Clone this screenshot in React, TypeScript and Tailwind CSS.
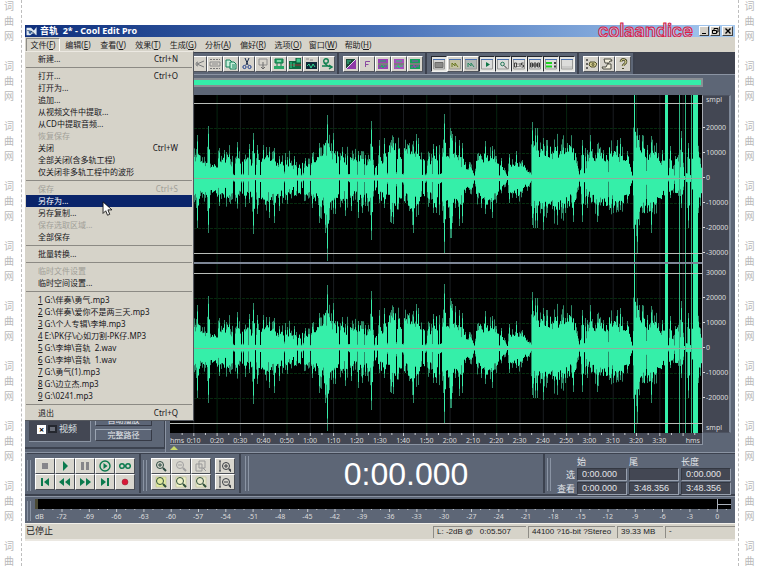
import React from "react";

interface MenuEntry {
  label: string;
  hotkey?: string;
  shortcut?: string;
  disabled?: boolean;
  active?: boolean;
}

const menuBar = [
  ["文件", "F"],
  ["编辑", "E"],
  ["查看", "V"],
  ["效果", "T"],
  ["生成", "G"],
  ["分析", "A"],
  ["偏好", "R"],
  ["选项", "O"],
  ["窗口", "W"],
  ["帮助", "H"],
];

const fileMenu: MenuEntry[][] = [
  [{ label: "新建...", shortcut: "Ctrl+N" }],
  [
    { label: "打开...", shortcut: "Ctrl+O" },
    { label: "打开为..." },
    { label: "追加..." },
    { label: "从视频文件中提取..." },
    { label: "从CD中提取音频..." },
    { label: "恢复保存", disabled: true },
    { label: "关闭", shortcut: "Ctrl+W" },
    { label: "全部关闭(含多轨工程)" },
    { label: "仅关闭非多轨工程中的波形" },
  ],
  [
    { label: "保存", shortcut: "Ctrl+S", disabled: true },
    { label: "另存为...", active: true },
    { label: "另存复制..." },
    { label: "保存选取区域...", disabled: true },
    { label: "全部保存" },
  ],
  [{ label: "批量转换..." }],
  [{ label: "临时文件设置", disabled: true }, { label: "临时空间设置..." }],
  [
    { hotkey: "1", label: "G:\\伴奏\\勇气.mp3" },
    { hotkey: "2", label: "G:\\伴奏\\爱你不是两三天.mp3" },
    { hotkey: "3", label: "G:\\个人专辑\\李坤.mp3" },
    { hotkey: "4", label: "E:\\PK仔\\心如刀割-PK仔.MP3" },
    { hotkey: "5", label: "G:\\李坤\\音轨  2.wav" },
    { hotkey: "6", label: "G:\\李坤\\音轨  1.wav" },
    { hotkey: "7", label: "G:\\勇气(1).mp3" },
    { hotkey: "8", label: "G:\\边立杰.mp3" },
    { hotkey: "9", label: "G:\\0241.mp3" },
  ],
  [{ label: "退出", shortcut: "Ctrl+Q" }],
];

// [x, amplitude] of the loudness curve
const loudness = [
  [0, 16], [25, 20], [35, 18], [45, 15], [55, 22], [65, 19], [75, 22], [85, 18],
  [95, 24], [105, 16], [115, 20], [127, 15], [135, 18], [142, 20], [150, 26],
  [157, 36], [163, 27], [170, 22], [180, 20], [190, 20], [200, 22], [206, 12],
  [212, 24], [222, 32], [230, 26], [240, 30], [248, 26], [258, 18], [266, 30],
  [276, 28], [288, 22], [293, 12], [302, 10], [304, 2], [306, 20], [315, 24],
  [325, 22], [335, 6], [337, 2], [339, 15], [348, 17], [358, 8], [361, 3],
  [363, 32], [375, 28], [390, 30], [405, 29], [409, 4], [413, 29], [417, 10],
  [420, 25], [430, 27], [445, 28], [458, 20], [462, 2], [464, 40], [470, 34],
  [482, 30], [488, 20], [495, 18], [503, 12], [507, 18], [512, 12], [516, 5],
  [520, 4], [524, 32], [532, 16],
];

// [x, height above zero, height below zero]
const peaks = [
  [27, 43, 50], [38, 52, 55], [49, 30, 28], [54, 28, 18], [67, 36, 30], [79, 34, 25],
  [83, 45, 56], [87, 33, 36], [93, 33, 20], [99, 31, 40], [104, 30, 45], [109, 22, 33],
  [117, 21, 26], [124, 22, 15], [135, 20, 20], [142, 25, 30], [149, 35, 45],
  [155, 33, 55], [157, 63, 83], [163, 45, 35], [165, 27, 36], [172, 31, 25],
  [175, 24, 38], [181, 20, 33], [188, 27, 40], [192, 22, 35], [195, 23, 28],
  [201, 57, 62], [209, 38, 25], [214, 40, 30], [221, 38, 45], [223, 41, 46],
  [228, 25, 30], [239, 35, 33], [243, 37, 55], [246, 44, 25], [248, 40, 20],
  [259, 25, 25], [263, 34, 35], [266, 32, 35], [274, 64, 75], [280, 50, 60],
  [282, 44, 45], [285, 42, 30], [289, 38, 48], [281, 47, 60], [292, 35, 45],
  [295, 16, 15], [299, 16, 12], [311, 22, 30], [315, 37, 36], [322, 32, 40],
  [326, 22, 20], [331, 20, 15], [339, 24, 25], [346, 27, 20], [352, 18, 15],
  [362, 56, 47], [365, 50, 50], [367, 50, 50], [373, 40, 52], [377, 38, 35],
  [387, 37, 44], [395, 30, 35], [397, 35, 30], [403, 30, 44], [412, 38, 44],
  [417, 28, 30], [420, 43, 20], [427, 30, 44], [433, 28, 28], [439, 28, 32],
  [443, 25, 35], [447, 38, 32], [450, 40, 32], [457, 27, 25], [464, 84, 85],
  [467, 50, 75], [472, 43, 35], [477, 33, 35], [481, 42, 55], [488, 25, 20],
  [492, 28, 15], [500, 32, 20], [505, 22, 10], [511, 47, 30], [518, 35, 50],
  [528, 31, 35],
];

// [x, width] of the bursts that clip
const clipped = [[464, 1], [495, 3], [509, 1], [515, 1], [521, 1], [523, 5]];

const noise = (n: number) => {
  const s = Math.sin(n * 127.1 + 11.7) * 43758.5453;
  return s - Math.floor(s);
};

const loudnessAt = (x: number) => {
  let i = 1;
  while (i < loudness.length - 1 && loudness[i][0] < x) i++;
  const [x0, a0] = loudness[i - 1];
  const [x1, a1] = loudness[i];
  return a0 + ((a1 - a0) * (x - x0)) / (x1 - x0);
};

const buildWave = (mid: number, top: number, bottom: number) => {
  let bright = "";
  let dim = "";
  for (let x = 0; x < 532; x++) {
    const amp = loudnessAt(x);
    const quiet = x < 300 ? 0.15 : 0.07;
    const dip = noise(x * 3 + 5) < quiet ? 0.2 : 1;
    const pair = Math.floor(x / 2);
    const up = Math.max(2, amp * (0.5 + 0.4 * noise(pair) + 0.3 * noise(x)) * dip);
    const down = Math.max(2, amp * (0.5 + 0.4 * noise(pair + 700) + 0.3 * noise(x + 900)) * dip);
    bright += `M${x + 0.5} ${(mid - up).toFixed(1)}V${(mid + down).toFixed(1)}`;
    if (noise(x + 400) < 0.35) {
      dim += `M${x + 0.5} ${(mid - up * 1.4).toFixed(1)}V${(mid + down * 1.4).toFixed(1)}`;
    }
  }
  peaks.forEach(([x, up, down]) => {
    const y0 = Math.max(top, mid - up);
    const y1 = Math.min(bottom, mid + down);
    dim += `M${x + 0.5} ${y0}V${y1}`;
    dim += `M${x - 0.5} ${mid - up * 0.6}V${mid + down * 0.6}`;
    bright += `M${x + 0.5} ${mid - up * 0.85}V${mid + down * 0.85}`;
    bright += `M${x + 1.5} ${mid - up * 0.55}V${mid + down * 0.55}`;
  });
  return { bright, dim };
};

const channels = [
  { mid: 83, top: 0, bottom: 167 },
  { mid: 253, top: 169, bottom: 338 },
];

const Waveform = () => (
  <svg
    viewBox="0 0 532 338"
    preserveAspectRatio="none"
    className="block h-[338px] w-full bg-black"
    role="img"
    aria-label="波形"
  >
    {Array.from({ length: 22 }, (_, i) => (
      <rect key={i} x={23.3 * (i + 1)} y="0" width="1" height="338" fill={i % 3 === 1 ? "#06240f" : "#1a1d21"} />
    ))}
    {channels.map(({ mid, top, bottom }) => {
      const { bright, dim } = buildWave(mid, top, bottom);
      return (
        <g key={mid}>
          {[-50, -25, 25, 50].map((d) => (
            <path key={d} d={`M0 ${mid + d + 0.5}H532`} stroke="#062a0e" strokeDasharray="3 1" />
          ))}
          <path d={dim} stroke="#2c8a68" fill="none" />
          <path d={bright} stroke="#35efa9" fill="none" />
          {clipped.map(([x, w]) => (
            <rect
              key={x}
              x={x}
              y={top}
              width={w}
              height={bottom - top}
              fill={w === 1 && x > 500 ? "#2cb582" : "#35efa9"}
            />
          ))}
          <path d={`M0 ${mid - 74.5}H532M0 ${mid + 75.5}H532`} stroke="#b9bdb9" />
          <path d={`M0 ${mid + 0.5}H532`} stroke="#8fae9c" />
        </g>
      );
    })}
    <rect x="0" y="167" width="532" height="2" fill="#7d8696" />
  </svg>
);

const Icon = ({ children }: { children: React.ReactNode }) => (
  <svg viewBox="0 0 12 12" className="h-3 w-3 shrink-0" fill="none" stroke="#3f4248" aria-hidden="true">
    {children}
  </svg>
);

const waveBox = (color: string, line: string) => (
  <>
    <rect x="1" y="1" width="10" height="4" fill={color} stroke="none" />
    <rect x="1" y="7" width="10" height="4" fill={color} stroke="none" />
    <path d="M1 6h10" stroke="#223" />
    <path d="M2 9h2l1-2 1 3 1-2h3M3 3h6" stroke={line} />
  </>
);

const editTools: [string, React.ReactNode][] = [
  ["撤消", <path d="M11 3L4 6l7 3M5 4a2 2 0 1 0 0 4" stroke="#77797b" />],
  [
    "多轨",
    <>
      <path d="M1 1.5h10M1 10.5h10" strokeDasharray="2 1" stroke="#777" />
      <path d="M1 4h10v4H1zM3 6h6" stroke="#8a8a8a" />
    </>,
  ],
  [
    "复制",
    <>
      <path d="M1 2h4l2 2v5H1z" fill="#c8f0dc" stroke="#128058" />
      <path d="M5 4h4l2 2v5H5zM7 7h3M7 9h3" fill="#c8f0dc" stroke="#128058" />
    </>,
  ],
  [
    "剪切",
    <>
      <path d="M4 0l3 7M8 0L5 7" stroke="#1a2a4a" />
      <circle cx="3.5" cy="9" r="1.6" stroke="#1c3c8c" />
      <circle cx="8.5" cy="9" r="1.6" stroke="#1c3c8c" />
    </>,
  ],
  [
    "粘贴",
    <>
      <path d="M2 1h8v6H2z" stroke="#8d8d8d" />
      <path d="M6 4v7M4 9l2 2 2-2" stroke="#6a6a6a" />
    </>,
  ],
  [
    "混合粘贴",
    <>
      <path d="M2 1h8v4H2z" fill="#2aa868" stroke="#107848" />
      <path d="M4 3h4" stroke="#d8ffe8" />
      <path d="M4 5v3M8 5v3" stroke="#107848" />
      <path d="M1 8h10v3H1z" fill="#2aa868" stroke="none" />
    </>,
  ],
  [
    "复制为新",
    <>
      <path d="M0 3h12v8H0z" fill="#0d6a40" stroke="none" />
      <path d="M7 0h5v5H7z" fill="#3fc488" stroke="#0d5030" />
      <path d="M0 7h12" stroke="#b02030" />
      <path d="M2 4v6M5 5v4" stroke="#32d890" />
    </>,
  ],
  [
    "修剪",
    <>
      <path d="M1 4h11v7H1z" fill="#102838" stroke="none" />
      <path d="M1 1h3M5 2h3" stroke="#888" />
      <path d="M2 8l2-2 2 4 2-4 2 3" stroke="#32d890" />
    </>,
  ],
  [
    "转换采样",
    <>
      <circle cx="5" cy="3" r="2.3" stroke="#118050" strokeWidth="1.400" />
      <path d="M3 5l4 3M1 8h6l3 1M8 7l3 2-3 2" stroke="#118050" strokeWidth="1.400" />
    </>,
  ],
];

const rangeTools: [string, React.ReactNode][] = [
  [
    "频谱视图",
    <>
      <path d="M1 1h10v10H1z" fill="#8e3aa8" stroke="none" />
      <path d="M1 1h10L1 11z" fill="#1c4a38" stroke="none" />
      <path d="M11 1L1 11" stroke="#e6d8f0" />
      <path d="M3 2v4M5 2v2" stroke="#36d090" />
    </>,
  ],
  ["标记", <path d="M4.500 9V3.500h4.500M4.500 6.500h3" stroke="#8a4aa0" />],
  ["上部", waveBox("#9c40b4", "#1bb060")],
  ["中部", waveBox("#a850bc", "#28d070")],
  ["下部", waveBox("#18a05c", "#9c40b4")],
];

const windowIcon = (inner: React.ReactNode, body = "#dcdcda") => (
  <>
    <path d="M0.5 1.5h11v9.500H.5z" fill={body} stroke="#9a9a98" />
    <path d="M0 1.500h12" stroke="#4a70b0" />
    {inner}
  </>
);

const viewTools: [string, React.ReactNode, boolean][] = [
  ["组织窗口", windowIcon(<path d="M2 4.500h8v5H2z" fill="#8a8a88" stroke="#6c6c6a" />, "#d4d4d2"), true],
  ["提示列表", windowIcon(<path d="M3 9V5l3 3V5l3 4" stroke="#6a7a20" />, "#c4c2a4"), false],
  ["播放列表", windowIcon(<path d="M3 9V5l3 3V5l3 4" stroke="#2a8a60" />, "#b0b8b4"), false],
  ["播放控制", windowIcon(<path d="M5 4l4 2.5L5 9z" fill="#107848" stroke="none" />), true],
  [
    "缩放控制",
    windowIcon(
      <>
        <circle cx="5.5" cy="6" r="1.8" stroke="#207858" />
        <path d="M7 7.500l3 3" stroke="#333" />
      </>
    ),
    true,
  ],
  [
    "时间窗口",
    windowIcon(<path d="M1.500 5h2v4h-2zM5 5.500v1M5 8v1M7 5v4M10.500 5h-2v2h2v2h-2" stroke="#222" strokeWidth=".8" />),
    true,
  ],
  [
    "选取查看",
    windowIcon(<path d="M1.500 5h2v4h-2zM5 5h2v4H5zM8.500 5h2v4h-2zM1.500 7h9" stroke="#222" strokeWidth=".8" />),
    true,
  ],
  [
    "电平表",
    windowIcon(
      <>
        <path d="M1 5h6M1 8.500h6" stroke="#20d020" strokeWidth="2" />
        <path d="M9 5h2M9 8.500h2" stroke="#404040" strokeWidth="2" />
      </>
    ),
    true,
  ],
  ["状态栏", windowIcon(<path d="M1 9h10" stroke="#b8b8b6" />), true],
];

const helpTools: [string, React.ReactNode][] = [
  [
    "设置",
    <>
      <path d="M1 1l2 2M3 1L1 3M1 5l2 2M3 5L1 7M1 9l2 2M3 9l-2 2" stroke="#444" strokeWidth=".8" />
      <path d="M5 4h5l2 2-2 3H6L4 7z" fill="#cfc98c" stroke="#55532c" />
      <circle cx="8" cy="6.500" r="1" stroke="#55532c" />
    </>,
  ],
  [
    "脚本",
    <path d="M3 1h7l1 2H9L7 6h3v5H2l-1-2h4l2-4H4z" fill="#f2eedc" stroke="#4a4a40" />,
  ],
  [
    "帮助",
    <>
      <path d="M4 4c0-4 5-3 5 0 0 2-3 2-3 4" stroke="#4a4a30" strokeWidth="2.600" />
      <path d="M4 4c0-4 5-3 5 0 0 2-3 2-3 4" stroke="#f0eca0" />
      <path d="M6 10v1" stroke="#4a4a30" strokeWidth="2" />
    </>,
  ],
];

const ToolGroup = ({ tools }: { tools: [string, React.ReactNode, boolean?][] }) => (
  <div className="flex items-center border-r-2 border-[#3c414e] pr-0.5 pl-1">
    {tools.map(([name, art, pressed]) => (
      <button
        key={name}
        aria-label={name}
        className={
          pressed
            ? "flex h-4 w-4 items-center justify-center border border-t-[#23262e] border-r-[#f0f0ee] border-b-[#f0f0ee] border-l-[#23262e] bg-[#e4e4e0]"
            : "flex h-4 w-4 items-center justify-center border border-t-white border-r-[#50545c] border-b-[#50545c] border-l-white bg-[#d6d3cb]"
        }
      >
        <Icon>{art}</Icon>
      </button>
    ))}
  </div>
);

const g = "#0b7a4e";
const transport: [string, React.ReactNode][] = [
  ["停止", <path d="M3 3h6v6H3z" fill="#85858a" stroke="none" />],
  ["播放", <path d="M4 1l5 5-5 5z" fill={g} stroke="none" />],
  ["暂停", <path d="M2 2h3v8H2zM7 2h3v8H7z" fill="#85858a" stroke="none" />],
  [
    "播放到结尾",
    <>
      <circle cx="6" cy="6" r="5" stroke={g} strokeWidth="1.400" />
      <path d="M4.500 3l4 3-4 3z" fill={g} stroke="none" />
    </>,
  ],
  [
    "循环播放",
    <>
      <circle cx="3" cy="6" r="2.300" stroke={g} strokeWidth="1.500" />
      <circle cx="9" cy="6" r="2.300" stroke={g} strokeWidth="1.500" />
    </>,
  ],
  ["到开头", <path d="M2 2h2v8H2zM10 2v8L5 6z" fill={g} stroke="none" />],
  ["快退", <path d="M5 2v8L0 6zM11 2v8L6 6z" fill={g} stroke="none" />],
  ["快进", <path d="M1 2v8l5-4zM7 2v8l5-4z" fill={g} stroke="none" />],
  ["到结尾", <path d="M2 2v8l5-4zM8 2h2v8H8z" fill={g} stroke="none" />],
  ["录音", <circle cx="6" cy="6" r="3" fill="#d81838" stroke="#902030" strokeWidth=".5" />],
];

const lens = (color: string, sign?: string) => (
  <>
    <circle cx="5" cy="5" r="3.500" stroke={color} />
    <path d="M8 8l3 3" stroke={color} strokeWidth="2" />
    {sign && <path d={sign} stroke={color} />}
  </>
);

const page = (color: string) => <path d="M1 1h10v10H1z" fill={color} stroke="#b8bc80" strokeWidth=".5" />;

const zoomTools: [string, React.ReactNode][] = [
  ["水平放大", lens("#2b4a40", "M3 5h4M5 3v4")],
  ["水平缩小", lens("#a0a0a0", "M3 5h4")],
  [
    "全部缩小",
    <>
      <path d="M1 4h6v7H1zM4 1h6v7H4z" stroke="#999" />
      <path d="M8 8l3 3" stroke="#999" />
    </>,
  ],
  ["放大选区", <>{page("#e2eaa0")}{lens("#30503c")}</>],
  ["放大左侧", <>{page("#eef0c8")}{lens("#30503c")}</>],
  ["放大右侧", <>{page("#e9e8cc")}{lens("#30503c")}</>],
];

const verticalZoom: [string, React.ReactNode][] = [
  ["垂直放大", <><path d="M1 1v10M0 1h2M0 11h2" /><g transform="translate(2 1)">{lens("#3a3e44", "M3 5h4M5 3v4")}</g></>],
  ["垂直缩小", <><path d="M1 1v10M0 1h2M0 11h2" /><g transform="translate(2 1)">{lens("#3a3e44", "M3 5h4")}</g></>],
];

const PadButton = ({ name, art }: { name: string; art: React.ReactNode }) => (
  <button
    aria-label={name}
    className="flex h-4 w-5 items-center justify-center border border-t-white border-r-[#4a4e56] border-b-[#4a4e56] border-l-white bg-[#d8d6ce]"
  >
    <Icon>{art}</Icon>
  </button>
);

const Grip = () => <div className="my-0.5 w-1 shrink-0 border-x border-[#8a94a4]" />;

const FileMenu = () => (
  <div className="absolute top-[14px] left-0 z-10 w-[169px] border-t border-r border-b border-t-[#ece9e2] border-r-[#55585e] border-b-[#55585e] bg-[#d6d3c9] p-px">
    {fileMenu.map((section, i) => (
      <ul
        key={i}
        className={i === 0 ? "" : "mt-0.5 border-t border-[#8c8a84] pt-0.5"}
      >
        {section.map((entry) => (
          <li key={entry.label}>
            <button
              disabled={entry.disabled}
              className={`flex h-3 w-full items-center justify-between pr-[14px] pl-3 whitespace-pre ${
                entry.active ? "bg-[#0a246a] text-white" : entry.disabled ? "text-[#a19f98]" : "text-[#16161a]"
              }`}
            >
              <span>
                {entry.hotkey && <span className="mr-0.5 underline">{entry.hotkey}</span>}
                {entry.label}
              </span>
              {entry.shortcut && <span>{entry.shortcut}</span>}
            </button>
          </li>
        ))}
      </ul>
    ))}
    <svg viewBox="0 0 12 18" className="absolute top-[149px] left-[77px] h-4 w-[11px]" aria-hidden="true">
      <path d="M1 1v13l3-3 2 5 2.500-1-2-5H11z" fill="#fff" stroke="#111" />
    </svg>
  </div>
);

const TitleBar = () => (
  <header className="flex h-3 items-center bg-linear-to-r from-[#0f2f7c] via-[#4a72b8] to-[#a6caf0] pr-0.5 pl-px text-white">
    <svg viewBox="0 0 12 12" className="h-[11px] w-3" aria-hidden="true">
      <path d="M0 2h5l3 3 3-4v9L7 8 4 10H0z" fill="#dfe9f2" />
      <path d="M1 5l5 1 3 3" stroke="#1a3050" fill="none" />
      <circle cx="4" cy="7" r="1.500" fill="#2f5e9a" />
    </svg>
    <h1 className="ml-0.5 flex-1 text-[9px] leading-3 font-bold whitespace-pre">音轨  2* - Cool Edit Pro</h1>
    <span className="mr-1.5 font-[Inter] text-[18px] leading-3 font-semibold text-[#b4cdec] [-webkit-text-stroke:1px_#dc2044]">
      colaandice
    </span>
    <div className="flex h-[10px] gap-px">
      <button aria-label="最小化" className="flex w-[10px] items-end justify-center border border-t-white border-r-[#404040] border-b-[#404040] border-l-white bg-[#d4d0c8]">
        <span className="mb-px h-px w-1 bg-black" />
      </button>
      <button aria-label="还原" className="flex w-[10px] items-center justify-center border border-t-white border-r-[#404040] border-b-[#404040] border-l-white bg-[#d4d0c8]">
        <svg viewBox="0 0 8 8" className="h-2 w-2" fill="none" stroke="#000">
          <path d="M3 3V1.500h4V5H5.500M1 3.500h4.500v3H1.500v-3" />
        </svg>
      </button>
      <button aria-label="关闭窗口" className="ml-px flex w-[11px] items-center justify-center border border-t-white border-r-[#404040] border-b-[#404040] border-l-white bg-[#d4d0c8]">
        <svg viewBox="0 0 8 8" className="h-2 w-2" fill="none" stroke="#000" strokeWidth="1.400">
          <path d="M1.500 1.500l5 5M6.500 1.500l-5 5" />
        </svg>
      </button>
    </div>
  </header>
);

const FilePane = () => (
  <aside className="flex w-[140px] shrink-0 flex-col justify-end pb-[3px]">
    <div className="flex h-[370px] items-end gap-1 border-r border-b-2 border-[#3c424f] px-1 pb-[5px]">
      <div className="flex h-full w-[62px] flex-col justify-end border-r border-b border-[#8b94a3] bg-[#434753] pb-[7px] pl-2">
        <label className="flex items-center gap-0.5 text-[9px] leading-[10px] text-[#dfe2e6]">
          <input
            type="checkbox"
            defaultChecked
            className="flex h-[9px] w-[9px] appearance-none items-center justify-center bg-white text-[9px] leading-none font-bold text-black before:content-['×']"
          />
          <span className="h-2 w-[9px] border-2 border-[#24272e] bg-[#6a6e78]" />
          视频
        </label>
      </div>
      <div className="flex flex-1 flex-col gap-[3px] pb-px text-[8px] leading-none text-[#e4e6ea]">
        <button className="h-3 border border-t-[#9aa4b2] border-r-[#363a46] border-b-[#363a46] border-l-[#9aa4b2] bg-[#5c6576]">
          自动播放
        </button>
        <button className="h-3 border border-t-[#9aa4b2] border-r-[#363a46] border-b-[#363a46] border-l-[#9aa4b2] bg-[#5c6576]">
          完整路径
        </button>
      </div>
      <div className="w-1" />
    </div>
  </aside>
);

const times = Array.from({ length: 21 }, (_, i) => {
  const s = (i + 1) * 10;
  return `${Math.floor(s / 60)}:${String(s % 60).padStart(2, "0")}`;
});

const TimeRuler = () => (
  <div className="mr-7 h-3 border-r border-b border-[#8b94a3] bg-[#434753] text-[7px] text-[#dcdcdc]">
    <svg viewBox="0 0 532 3" preserveAspectRatio="none" className="block h-[3px] w-full">
      {Array.from({ length: 45 }, (_, i) => (
        <rect key={i} x={11.65 * (i + 1)} y="0" width="1" height={i % 2 ? 3 : 2} fill="#c9ccd0" />
      ))}
    </svg>
    <div className="flex h-2 items-center leading-none">
      <span className="w-3">hms</span>
      {times.map((t) => (
        <span key={t} className="w-0 flex-1 text-center">
          {t}
        </span>
      ))}
      <span className="w-[31px] pr-0.5 text-right">hms</span>
    </div>
  </div>
);

const upperScale = ["20000", "10000", "0", "-10000", "-20000", "-30000"];
const lowerScale = ["20000", "10000", "0", "-10000", "-20000"];

const ScaleRow = ({ value }: { value: string }) => (
  <div className="flex h-[25px] items-center gap-px">
    <span className="h-px w-0.5 bg-[#dcdcdc]" />
    {value}
  </div>
);

const SampleScale = () => (
  <div className="w-[29px] border-y border-r-2 border-l border-y-[#4c5260] border-r-[#7f8999] border-l-[#a8acb4] bg-[#434753] text-[7px] leading-none text-[#dcdcdc]">
    <div className="h-[19px] pl-[3px]">smpl</div>
    {upperScale.map((v) => (
      <ScaleRow key={v} value={v} />
    ))}
    <div className="flex h-5 items-start pt-1 pl-[3px]">30000</div>
    {lowerScale.map((v) => (
      <ScaleRow key={v} value={v} />
    ))}
    <div className="flex h-[22px] items-end pb-px pl-[3px]">smpl</div>
  </div>
);

const WavePane = () => (
  <section className="min-w-0 flex-1 border-l border-[#8b94a3] pt-[3px] pr-1 pl-1">
    <div className="mr-7 h-[9px] border-2 border-[#8a8f94] bg-[#35efa9]" />
    <div className="mt-2 flex">
      <div className="min-w-0 flex-1">
        <Waveform />
      </div>
      <SampleScale />
    </div>
    <TimeRuler />
    <svg viewBox="0 0 8 4" className="mt-px h-1 w-2" aria-hidden="true">
      <path d="M4 0l4 4H0z" fill="#c8d86a" />
    </svg>
  </section>
);

const ranges = [
  { name: "选", values: ["0:00.000", "", "0:00.000"] },
  { name: "查看", values: ["0:00.000", "3:48.356", "3:48.356"] },
];

const heads = ["始", "尾", "长度"];

const SelectionPanel = () => (
  <table className="mr-0.5 ml-0.5 border-separate border-spacing-x-0.5 border-spacing-y-0 text-[9px] leading-none text-[#e2e4e8]">
    <thead>
      <tr className="h-[11px]">
        <td className="w-5" />
        {heads.map((h) => (
          <th key={h} className="text-left font-normal">
            {h}
          </th>
        ))}
      </tr>
    </thead>
    <tbody>
      {ranges.map((r) => (
        <tr key={r.name} className="h-[14px]">
          <th className="text-right font-normal whitespace-nowrap">{r.name}</th>
          {r.values.map((v, i) => (
            <td key={i} className="p-0">
              <input
                aria-label={`${r.name} ${heads[i]}`}
                defaultValue={v}
                className="block h-[13px] w-[50px] border border-t-[#343842] border-r-[#98a0ae] border-b-[#98a0ae] border-l-[#343842] bg-[#434753] pl-1 font-['Liberation_Sans',sans-serif] text-[9px] leading-none"
              />
            </td>
          ))}
        </tr>
      ))}
    </tbody>
  </table>
);

const ControlDeck = () => (
  <section className="flex h-11 border-t border-b-2 border-t-[#8b94a3] border-b-[#3c424f] pb-px pl-0.5">
    <div className="flex border-t border-r-2 border-[#3c424f] pt-1 pr-1">
      <Grip />
      <div className="ml-1 grid grid-cols-5 content-start">
        {transport.map(([name, art]) => (
          <PadButton key={name} name={name} art={art} />
        ))}
      </div>
    </div>
    <div className="flex gap-1 border-t border-r-2 border-[#3c424f] pt-1 pr-1 pl-0.5">
      <Grip />
      <div className="grid grid-cols-3 content-start">
        {zoomTools.map(([name, art]) => (
          <PadButton key={name} name={name} art={art} />
        ))}
      </div>
      <div className="grid content-start">
        {verticalZoom.map(([name, art]) => (
          <PadButton key={name} name={name} art={art} />
        ))}
      </div>
    </div>
    <div className="flex flex-1 border-t border-r-2 border-[#3c424f] pl-1">
      <Grip />
      <output className="flex-1 pl-5 text-center font-['Liberation_Sans',sans-serif] text-[32px] leading-10 text-white">
        0:00.000
      </output>
    </div>
    <div className="flex border-t border-[#3c424f] pt-0.5 pl-0.5">
      <Grip />
      <SelectionPanel />
    </div>
  </section>
);

const levels = Array.from({ length: 25 }, (_, i) => String(i * 3 - 72));

const LevelMeter = () => (
  <section className="flex h-[27px] border-t border-[#8b94a3] pt-0.5 pl-0.5">
    <Grip />
    <div className="ml-1 flex-1 pr-1">
      <div className="flex h-[10px] bg-black">
        <span className="w-[3px] bg-[#4b4a35]" />
        <span className="flex-1" />
        <span className="flex w-[14px] flex-col border-l border-[#aab0ba]">
          <span className="flex-1 border-b border-[#aab0ba]" />
          <span className="flex-1" />
        </span>
      </div>
      <svg viewBox="0 0 696 3" preserveAspectRatio="none" className="block h-[3px] w-full">
        {Array.from({ length: 76 }, (_, i) => (
          <rect key={i} x={8.3 + i * 9.1} y="0" width="1" height={i % 3 === 2 ? 3 : 1} fill="#c9ccd0" />
        ))}
      </svg>
      <div className="flex h-[9px] items-center text-[7px] leading-none text-[#dcdcdc]">
        <span className="w-[13px]">dB</span>
        {levels.map((l) => (
          <span key={l} className="w-0 flex-1 text-center">
            {l}
          </span>
        ))}
      </div>
    </div>
  </section>
);

const StatusBar = () => (
  <footer className="flex h-[18px] items-center gap-0.5 border-t border-b-2 border-t-[#f2f0ea] border-b-[#ebe8e2] bg-[#d6d3c9] font-['Liberation_Sans','Noto_Sans_CJK_SC',sans-serif] text-[8px] leading-none whitespace-pre text-[#1c1c1e]">
    <span className="flex-1 pl-px text-[9px]">已停止</span>
    <span className="flex h-3 w-[93px] items-center border-t border-l border-[#8e8c86] pl-[3px]">
      L: -2dB @   0:05.507
    </span>
    <span className="flex h-3 w-[87px] items-center border-t border-l border-[#8e8c86] pl-[3px]">
      44100 ?16-bit ?Stereo
    </span>
    <span className="flex h-3 w-[46px] items-center border-t border-l border-[#8e8c86] pl-[3px]">39.33 MB</span>
    <span className="flex h-3 w-[70px] items-start border-t border-l border-[#8e8c86] pl-[3px]">-</span>
  </footer>
);

// the mark repeats down the page, the last one without its third character
const marks = Array.from({ length: 10 }, (_, i) => (i < 9 ? ["词", "曲", "网"] : ["词", "曲"]));

const SideStrip = ({ className }: { className: string }) => (
  <div
    aria-hidden="true"
    className={`flex w-[22px] shrink-0 flex-col gap-[19px] overflow-hidden border-dashed border-[#bdbdbd] pt-px text-center text-[10px] leading-[11px] text-[#b9b9b9] ${className}`}
  >
    {marks.map((chars, i) => (
      <div key={i} className="flex flex-col gap-1">
        {chars.map((c) => (
          <span key={c}>{c}</span>
        ))}
      </div>
    ))}
  </div>
);

export default function App() {
  return (
    <div className="flex h-screen overflow-hidden bg-white font-['Noto_Sans','Noto_Sans_CJK_SC',sans-serif]">
      <SideStrip className="mr-[3px] border-r pr-[3px]" />
      <main className="my-[25px] min-w-0 flex-1 self-start bg-[#5d6676]">
        <TitleBar />
        <nav className="relative flex h-[15px] items-center gap-px bg-[#d6d3c9] pl-px text-[8px] leading-none text-[#1c1c1e]">
          {menuBar.map(([name, key], i) => (
            <button
              key={key}
              className={
                i === 0
                  ? "h-[14px] w-[34px] border border-t-[#8e8c86] border-r-white border-b-transparent border-l-[#8e8c86] whitespace-nowrap"
                  : "h-[14px] w-[34px] border border-transparent whitespace-nowrap"
              }
            >
              {name}(<u>{key}</u>)
            </button>
          ))}
          <FileMenu />
        </nav>
        <div className="flex h-[23px] border-t border-b border-t-[#3c414e] border-b-[#8b94a3] bg-[#3f434f]">
          <div className="flex bg-[#5d6676]">
            <div className="w-[162px]" />
            <ToolGroup tools={editTools} />
            <ToolGroup tools={rangeTools} />
            <ToolGroup tools={viewTools} />
            <ToolGroup tools={helpTools} />
          </div>
        </div>
        <div className="flex h-[377px] text-[8px]">
          <FilePane />
          <WavePane />
        </div>
        <ControlDeck />
        <LevelMeter />
        <StatusBar />
      </main>
      <SideStrip className="ml-[3px] border-l" />
    </div>
  );
}
